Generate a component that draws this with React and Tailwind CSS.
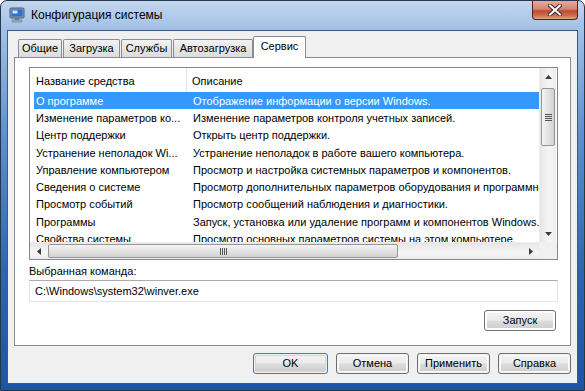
import React from "react";

const descr = [
  ["О программе", "Отображение информации о версии Windows."],
  ["Изменение параметров ко...", "Изменение параметров контроля учетных записей."],
  ["Центр поддержки", "Открыть центр поддержки."],
  ["Устранение неполадок Wi...", "Устранение неполадок в работе вашего компьютера."],
  ["Управление компьютером", "Просмотр и настройка системных параметров и компонентов."],
  ["Сведения о системе", "Просмотр дополнительных параметров оборудования и программного обеспечения."],
  ["Просмотр событий", "Просмотр сообщений наблюдения и диагностики."],
  ["Программы", "Запуск, установка или удаление программ и компонентов Windows."],
  ["Свойства системы", "Просмотр основных параметров системы на этом компьютере."],
];

const tabs = [
  { label: "Общие", w: "w-[44px]" },
  { label: "Загрузка", w: "w-[57px]" },
  { label: "Службы", w: "w-[51px]" },
  { label: "Автозагрузка", w: "w-[80px]" },
];

function WinButton({ children, w = "w-[73px]", isDefault = false }) {
  return (
    <div
      className={`${w} h-[21px] rounded-[3px] border ${
        isDefault ? "border-[#3c7fb1]" : "border-[#707070]"
      } p-[1px]`}
    >
      <div
        className={`h-full rounded-[2px] border ${
          isDefault ? "border-[#aee1fb]" : "border-[#fbfbfb]"
        } bg-[linear-gradient(180deg,#f2f2f2_0%,#ebebeb_48%,#dddddd_52%,#cfcfcf_100%)] flex items-center justify-center text-[11px] text-black leading-none`}
      >
        {children}
      </div>
    </div>
  );
}

function Arrow({ dir }) {
  const pts = {
    up: "0,4 3.5,0 7,4",
    down: "0,0 3.5,4 7,0",
    left: "4,0 0,3.5 4,7",
    right: "0,0 4,3.5 0,7",
  }[dir];
  const vert = dir === "up" || dir === "down";
  return (
    <svg width={vert ? 7 : 4} height={vert ? 4 : 7} viewBox={vert ? "0 0 7 4" : "0 0 4 7"}>
      <polygon points={pts} fill="#3b3b3b" />
    </svg>
  );
}

function VScroll() {
  return (
    <div className="w-[17px] h-[174px] flex flex-col bg-[linear-gradient(90deg,#e6e6e6,#f6f6f6_60%,#ececec)] border-l border-[#ededed]">
      <div className="h-[17px] flex items-center justify-center">
        <Arrow dir="up" />
      </div>
      <div className="mt-[3px] mx-[1px] h-[58px] rounded-[2px] border border-[#979797] bg-[linear-gradient(90deg,#f4f4f4,#e3e3e3_50%,#d2d2d2)] flex flex-col items-center justify-center gap-[1px]">
        <div className="w-[7px] h-[1px] bg-[#555]" />
        <div className="w-[7px] h-[1px] bg-[#555]" />
        <div className="w-[7px] h-[1px] bg-[#555]" />
        <div className="w-[7px] h-[1px] bg-[#555]" />
      </div>
      <div className="flex-1" />
      <div className="h-[17px] flex items-center justify-center">
        <Arrow dir="down" />
      </div>
    </div>
  );
}

function HScroll() {
  return (
    <div className="flex h-[17px]">
      <div className="w-[509px] h-[17px] flex bg-[linear-gradient(180deg,#e6e6e6,#f6f6f6_60%,#ececec)] border-t border-[#ededed]">
        <div className="w-[17px] flex items-center justify-center">
          <Arrow dir="left" />
        </div>
        <div className="ml-[1px] my-[1px] w-[350px] rounded-[2px] border border-[#979797] bg-[linear-gradient(180deg,#f4f4f4,#e3e3e3_50%,#d2d2d2)] flex items-center justify-center gap-[1px]">
          <div className="w-[1px] h-[7px] bg-[#555]" />
          <div className="w-[1px] h-[7px] bg-[#555]" />
          <div className="w-[1px] h-[7px] bg-[#555]" />
          <div className="w-[1px] h-[7px] bg-[#555]" />
        </div>
        <div className="flex-1" />
        <div className="w-[17px] flex items-center justify-center">
          <Arrow dir="right" />
        </div>
      </div>
      <div className="w-[18px] h-[17px] bg-[#f0f0f0]" />
    </div>
  );
}

function AppIcon() {
  return (
    <svg width="16" height="16" viewBox="0 0 16 16">
      <rect x="1" y="1" width="14" height="10" rx="1" fill="#8a9bb0" stroke="#4d5d73" />
      <rect x="2.5" y="2.5" width="11" height="7" fill="#2f6fd0" />
      <rect x="3.5" y="3.5" width="5" height="3" fill="#cfe3ff" />
      <rect x="6" y="11" width="4" height="2" fill="#6b7a8d" />
      <rect x="3" y="13" width="10" height="2" rx="0.5" fill="#a9b6c6" stroke="#5b6b80" strokeWidth="0.6" />
    </svg>
  );
}

export default function App() {
  return (
    <div className="w-[585px] h-[391px] flex flex-col rounded-t-[7px] border border-[#25364f] bg-[linear-gradient(180deg,#c2d7ef_0%,#a3c1e6_7%,#5c8fcc_35%,#2d66ae_70%,#1d55a0_100%)] font-['Liberation_Sans',Arial,sans-serif] overflow-hidden">
      {/* Title bar */}
      <div className="h-[29px] flex items-start">
        <div className="pl-[8px] pt-[6px]">
          <AppIcon />
        </div>
        <div className="pl-[6px] pt-[6px] text-[12px] leading-[16px] text-black">
          Конфигурация системы
        </div>
        <div className="flex-1" />
        <div className="mr-[6px] w-[46px] h-[19px] rounded-b-[4px] border border-t-0 border-[#5a2018] bg-[linear-gradient(180deg,#e7aa9d_0%,#d48471_45%,#c0492c_55%,#cf6b52_80%,#e0a08c_100%)] flex items-center justify-center">
          <svg width="14" height="12" viewBox="0 0 14 12">
            <path d="M2 1.5 L12 10.5 M12 1.5 L2 10.5" stroke="#3d2a28" strokeWidth="4" strokeLinecap="square" />
            <path d="M2 1.5 L12 10.5 M12 1.5 L2 10.5" stroke="#ffffff" strokeWidth="2" strokeLinecap="square" />
          </svg>
        </div>
      </div>

      {/* Client area */}
      <div className="ml-[6px] mr-[6px] h-[354px] border border-[#3a5b86] bg-[#f0f0f0] flex flex-col pl-[6px] pt-[5px]">
        {/* Tabs */}
        <div className="h-[21px] flex items-end pl-[4px] relative z-10">
          {tabs.map((t) => (
            <div
              key={t.label}
              className={`${t.w} h-[18px] mr-[1px] rounded-t-[2px] border border-b-0 border-[#898c95] bg-[linear-gradient(180deg,#f2f2f2,#e6e6e6_50%,#dcdcdc)] flex items-center justify-center text-[11px] text-black`}
            >
              {t.label}
            </div>
          ))}
          <div className="w-[53px] h-[22px] -ml-[1px] -mb-[1px] rounded-t-[2px] border border-b-0 border-[#898c95] bg-white flex items-center justify-center text-[11px] text-black pb-[2px]">
            Сервис
          </div>
        </div>

        {/* Tab panel */}
        <div className="w-[557px] h-[289px] border border-[#898c95] bg-white pl-[14px] pt-[9px] flex flex-col">
          {/* List view */}
          <div className="w-[529px] h-[193px] border border-[#828790] bg-white flex flex-col">
            <div className="flex h-[174px]">
              <div className="w-[509px] h-[174px] overflow-hidden">
                <div className="h-[24px] flex text-[11px] text-black">
                  <div className="w-[157px] pl-[6px] pt-[5px] border-r border-[#e5e5e5]">Название средства</div>
                  <div className="pl-[5px] pt-[5px]">Описание</div>
                </div>
                <div className="pl-[4px]">
                  {descr.map(([n, d], i) => (
                    <div
                      key={n}
                      className={`h-[17.25px] pt-[1px] flex items-center text-[11px] whitespace-nowrap ${
                        i === 0 ? "bg-[#3399ff] text-white" : "text-black"
                      }`}
                    >
                      <div className="w-[153px] shrink-0 pl-[2px]">{n}</div>
                      <div className="pl-[6px] shrink-0">{d}</div>
                    </div>
                  ))}
                </div>
              </div>
              <VScroll />
            </div>
            <HScroll />
          </div>

          <div className="mt-[5px] h-[13px] text-[11px] leading-[13px] text-black">Выбранная команда:</div>
          <div className="mt-[2px] w-[529px] h-[22px] border border-[#abadb3] border-l-[#e2e3ea] border-r-[#e2e3ea] border-b-[#e3e9ef] bg-white pl-[5px] flex items-center text-[11px] text-black">
            C:\Windows\system32\winver.exe
          </div>
          <div className="mt-[8px] w-[527px] flex justify-end">
            <WinButton w="w-[72px]">Запуск</WinButton>
          </div>
        </div>

        {/* Bottom buttons */}
        <div className="mt-[7px] pr-[6px] flex justify-end gap-[8px]">
          <WinButton w="w-[75px]" isDefault>
            OK
          </WinButton>
          <WinButton>Отмена</WinButton>
          <WinButton>Применить</WinButton>
          <WinButton>Справка</WinButton>
        </div>
      </div>
    </div>
  );
}
